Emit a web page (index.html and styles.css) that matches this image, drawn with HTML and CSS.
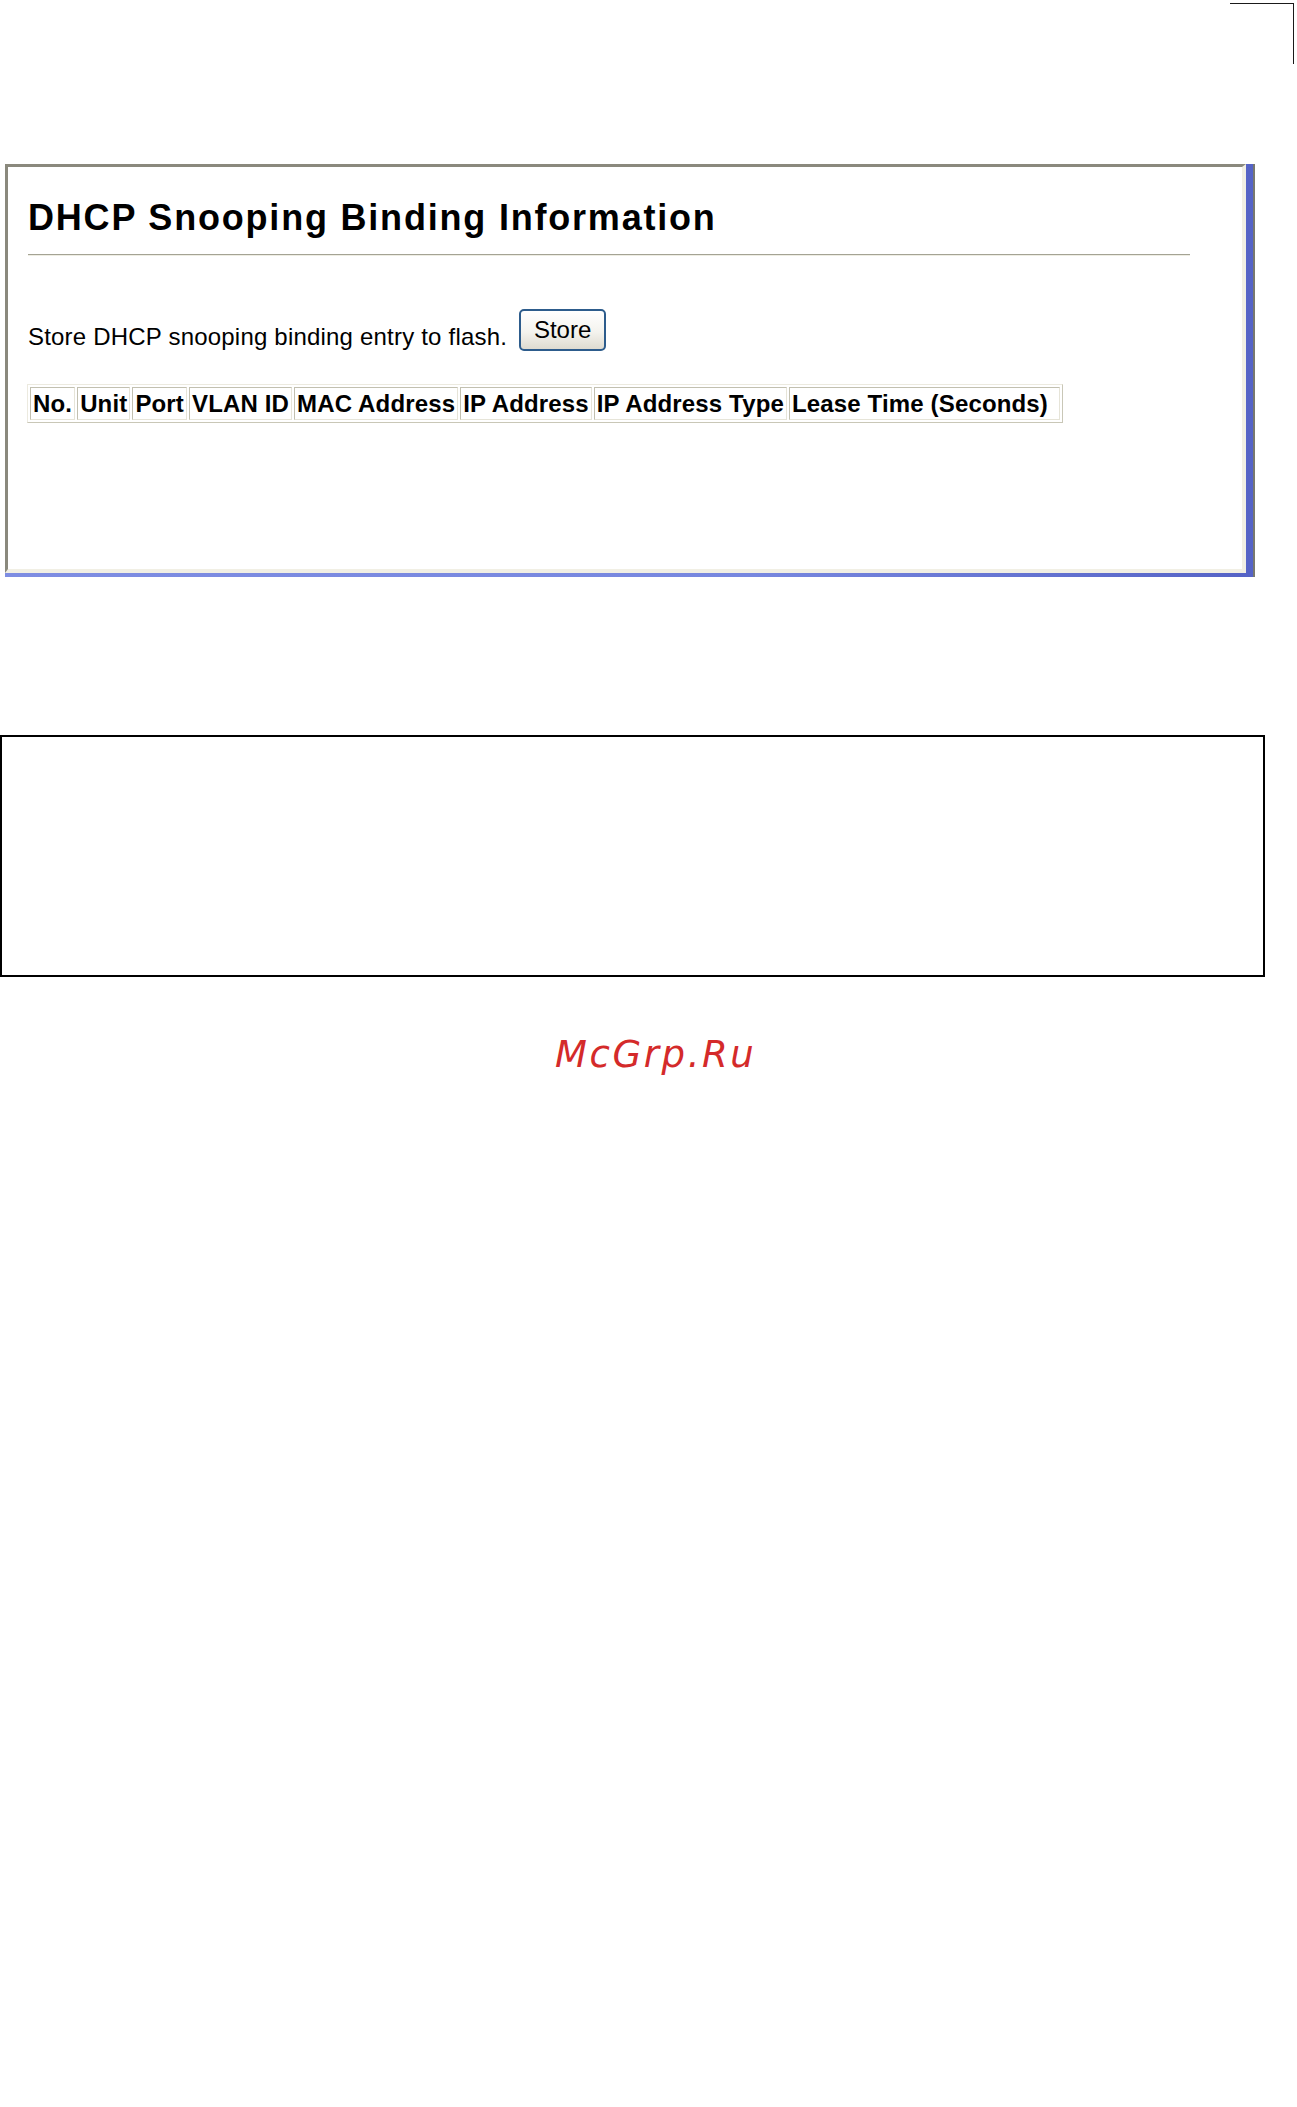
FILE: index.html
```html
<!DOCTYPE html>
<html lang="en">
<head>
  <meta charset="UTF-8" />
  <meta name="viewport" content="width=device-width, initial-scale=1.0"/>
  <title>DHCP Snooping Binding Information</title>
  <link rel="stylesheet" href="styles.css">
</head>
<body>
  <div class="crop-mark"></div>

  <div class="shell">
    <div class="panel">
      <h1>DHCP Snooping Binding Information</h1>
      <hr class="title-rule" />

      <form class="store-row" action="#" method="post">
        <span class="store-label">Store DHCP snooping binding entry to flash.</span>
        <button type="button" class="store-btn">Store</button>
      </form>

      <table class="binding-table">
        <tr>
          <th>No.</th>
          <th>Unit</th>
          <th>Port</th>
          <th>VLAN ID</th>
          <th>MAC Address</th>
          <th>IP Address</th>
          <th>IP Address Type</th>
          <th class="lease">Lease Time (Seconds)</th>
        </tr>
      </table>
    </div>
  </div>

  <div class="note"></div>

  <div class="watermark">McGrp.Ru</div>
</body>
</html>
```

FILE: styles.css
```css
body {
  margin: 0;
  font-family: "Liberation Sans", Arial, sans-serif;
  color: #000000;
  background: #ffffff;
}

.crop-mark {
  width: 63px;
  height: 60px;
  margin: 3px 3px 0 auto;
  border-top: 1px solid #1a1a1a;
  border-right: 1px solid #1a1a1a;
}

/* window frame: blue shadow on the right and bottom */
.shell {
  width: 1250px;
  height: 413px;
  margin: 100px 0 0 5px;
  box-sizing: border-box;
  padding: 0 7px 4px 0;
  background: linear-gradient(to right, #7e8de2 0%, #7787df 60%, #5563c6 100%);
  border-right: 2px solid #78786f;
}

.panel {
  height: 409px;
  box-sizing: border-box;
  padding: 31px 52px 0 20px;
  background: #ffffff;
  border-top: 3px solid #8a897d;
  border-left: 3px solid #8a897d;
  border-right: 4px solid #f1efe4;
  border-bottom: 4px solid #f1efe4;
}

.panel h1 {
  margin: 0;
  font-size: 36px;
  line-height: 40px;
  font-weight: bold;
  letter-spacing: 1.8px;
}

.title-rule {
  height: 0;
  margin: 16px 0 0 0;
  border: none;
  border-top: 1px solid #a4a394;
  border-bottom: 1px solid #eeede3;
}

.store-row {
  display: flex;
  align-items: flex-start;
  gap: 12px;
  margin: 53px 0 0 0;
}

.store-label {
  margin-top: 14px;
  font-size: 24px;
  line-height: 28px;
  letter-spacing: 0.2px;
}

.store-btn {
  width: 87px;
  height: 42px;
  padding: 0;
  font-family: "Liberation Sans", Arial, sans-serif;
  font-size: 24px;
  color: #000000;
  border: 2px solid #2d5c8c;
  border-radius: 5px;
  background: linear-gradient(to bottom, #ffffff 0%, #f4f3ee 55%, #dedbd0 100%);
}

.binding-table {
  margin: 33px 0 0 -1px;
  border-collapse: separate;
  border-spacing: 2px;
  border-top: 1px solid #eceadf;
  border-left: 1px solid #eceadf;
  border-right: 1px solid #c9c7b7;
  border-bottom: 1px solid #c9c7b7;
}

.binding-table th {
  padding: 1px 2px;
  font-size: 24px;
  line-height: 29px;
  font-weight: bold;
  letter-spacing: 0.15px;
  text-align: left;
  white-space: nowrap;
  border-top: 1px solid #c2c0b0;
  border-left: 1px solid #c2c0b0;
  border-right: 1px solid #e6e4d8;
  border-bottom: 1px solid #e6e4d8;
}

.binding-table th.lease {
  padding-right: 11px;
}

.note {
  width: 1265px;
  height: 242px;
  margin-top: 158px;
  box-sizing: border-box;
  border: 2px solid #000000;
}

.watermark {
  margin-top: 58px;
  padding-left: 555px;
  font-family: "DejaVu Sans", Verdana, sans-serif;
  font-style: italic;
  font-size: 37px;
  line-height: 40px;
  letter-spacing: 2.6px;
  color: #d42a2a;
}
```
